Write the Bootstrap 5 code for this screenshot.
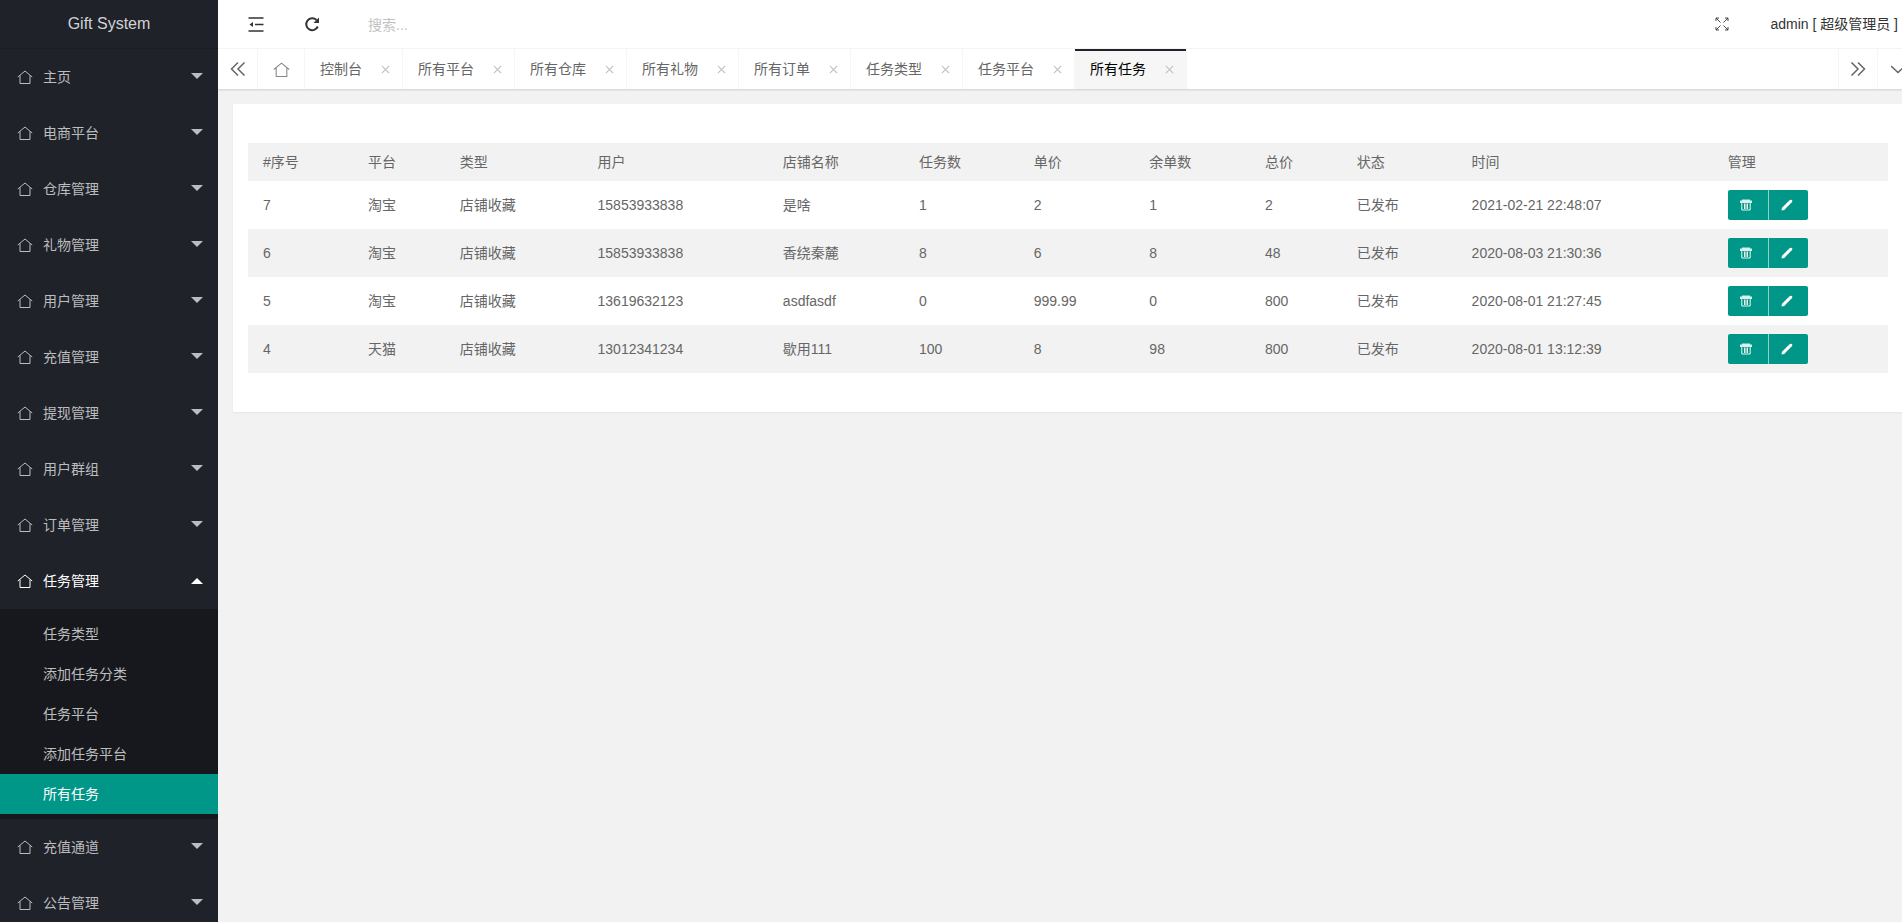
<!DOCTYPE html>
<html lang="zh-CN">
<head>
<meta charset="utf-8">
<meta name="viewport" content="width=device-width, initial-scale=1">
<title>Gift System</title>
<link href="https://cdn.jsdelivr.net/npm/bootstrap@5.3.0/dist/css/bootstrap.min.css" rel="stylesheet">
<style>
  body { font: 14px/24px "Liberation Sans", "Noto Sans CJK SC", sans-serif; color: #666; background: #f2f2f2; }
  a { color: inherit; text-decoration: none; }
  svg { display: block; fill: none; stroke: currentColor; flex: none; }

  .side { width: 218px; background: #20222a; color: #bcbdbf; }
  .side-logo { height: 49px; font-size: 16px; color: #d2d3d4; border-bottom: 1px solid #1b1d23; }
  .side-item { height: 56px; padding: 0 15px 0 17px; gap: 10px; }
  .side-item.open { color: #fff; }
  .caret { width: 12px; margin-bottom: 2px; border: 6px solid transparent; border-top-color: currentColor; border-bottom: 0; }
  .open .caret { margin-bottom: 0; border-top: 0; border-bottom: 6px solid currentColor; }
  .side-sub { padding: 5px 0; background: #17181d; }
  .side-sub a { display: block; padding: 0 43px; line-height: 40px; }
  .side-sub .current { background: #009688; color: #fff; }

  .top { height: 49px; padding: 0 4px 0 10px; color: #333; border-bottom: 1px solid #f6f6f6; }
  .tool { width: 56px; border: 0; background: none; color: inherit; padding: 0; display: flex; justify-content: center; }
  .search { width: 200px; border: 0; padding: 2px 0 0; margin-left: 28px; color: #666; background: none; outline: 0; }
  .search::placeholder { color: #c2c2c2; opacity: 1; }
  .user { margin-left: 20px; }

  .tabs { height: 40px; box-shadow: 0 1px 2px rgba(0,0,0,.15); z-index: 1; }
  .tab-ctl, .tab-page { border: 0; border-right: 1px solid #f6f6f6; background: none; color: #666; padding: 0; }
  .tab-ctl { width: 40px; display: flex; align-items: center; justify-content: center; flex: none; }
  .tab-home { width: 47px; color: #888; }
  .tab-page { display: flex; align-items: center; padding: 0 12px 0 15px; gap: 19px; white-space: nowrap; }
  .tab-page button { border: 0; background: none; padding: 0; color: #c2c2c2; }
  .tab-page.current { background: #f6f6f6; color: #000; box-shadow: inset 0 2px #20222a; }
  .tab-next { border-left: 1px solid #f6f6f6; }
  .tab-more { width: 24px; overflow: hidden; justify-content: flex-start; padding-left: 13px; border: 0; }

  .panel { margin: 15px 0 15px 15px; padding: 39px 14px 39px 15px; background: #fff; box-shadow: 0 1px 2px rgba(0,0,0,.06); }
  .tasks { width: 100%; table-layout: fixed; margin: 0; }
  .tasks th, .tasks td { padding: 0 15px; font-weight: 400; white-space: nowrap; }
  .tasks th { height: 38px; }
  .tasks td { height: 48px; }
  .tasks thead tr, .tasks tbody tr:nth-child(even) { background: #f2f2f2; }
  .act { width: 40px; height: 30px; border: 0; border-radius: 2px 0 0 2px; background: #009688; color: #fff; display: flex; align-items: center; justify-content: center; padding: 0 3px 0 0; }
  .act + .act { border-left: 1px solid #8fd0ca; border-radius: 0 2px 2px 0; }
</style>
</head>
<body>
<svg class="d-none" xmlns="http://www.w3.org/2000/svg">
  <symbol id="i-home" viewBox="0 0 16 16"><path d="M.8 8 8 2 15.200 8M3 6.500V14.500H13V6.500"/></symbol>
  <symbol id="i-x" viewBox="0 0 8 8"><path d="M.8.8 7.200 7.200M7.200.8.8 7.200"/></symbol>
  <symbol id="i-trash" viewBox="0 0 12 12"><path d="M0 1.500H12V4H0zM2 .5H10V2H2z" fill="currentColor" fill-opacity=".85" stroke="none"/><path d="M1.800 4V11H10.200V4M4.500 4.500V10M6 4.500V10M7.500 4.500V10" stroke-width=".9"/></symbol>
  <symbol id="i-pen" viewBox="0 0 12 12"><path d="M.5 11.500 1 8.800 8.500 1.200Q10 .2 11 1 11.800 2 10.800 3.300L3.200 10.900Z" fill="currentColor" stroke="none"/></symbol>
</svg>

<div class="d-flex vh-100 overflow-hidden">
  <nav class="side flex-shrink-0 overflow-hidden" id="side">
    <div class="side-logo d-flex align-items-center justify-content-center">Gift System</div>
  </nav>

  <div class="flex-grow-1 d-flex flex-column overflow-hidden">
    <header class="top bg-white d-flex align-items-center flex-shrink-0">
      <button class="tool" aria-label="收起菜单"><svg width="16" height="16" viewBox="0 0 16 16"><path d="M.5 2H15.500M7 8.500H15.500M.5 15H15.500" stroke-width="1.600"/><path d="M1.500 8.500 5 6V11Z" fill="currentColor" stroke="none"/></svg></button>
      <button class="tool" aria-label="刷新"><svg width="16" height="16" viewBox="0 0 16 16" stroke-width="2"><path d="M13.800 10.500A6 6 0 1 1 12.500 4"/><path d="M15 1.500V7H9.500Z" fill="currentColor" stroke="none"/></svg></button>
      <input class="search" type="text" placeholder="搜索..." aria-label="搜索">
      <button class="tool ms-auto" aria-label="全屏"><svg width="14" height="14" viewBox="0 0 14 14" stroke-width=".9"><path d="M1 4V1H4M1 1 5.500 5.500M10 1H13V4M13 1 8.500 5.500M1 10V13H4M1 13 5.500 8.500M13 10V13H10M13 13 8.500 8.500"/></svg></button>
      <a href="#" class="user">admin [ 超级管理员 ]</a>
    </header>

    <div class="tabs bg-white d-flex flex-shrink-0 position-relative">
      <button class="tab-ctl" aria-label="向左"><svg width="16" height="16" viewBox="0 0 16 16" stroke-width="1.500"><path d="M8 1.500 1.500 8 8 14.500M14.500 1.500 8 8 14.500 14.500"/></svg></button>
      <button class="tab-ctl tab-home" aria-label="首页"><svg width="17" height="17"><use href="#i-home"/></svg></button>
      <div class="d-flex flex-grow-1 overflow-hidden" id="tabs"></div>
      <button class="tab-ctl tab-next" aria-label="向右"><svg width="16" height="16" viewBox="0 0 16 16" stroke-width="1.500"><path d="M1.500 1.500 8 8 1.500 14.500M8 1.500 14.500 8 8 14.500"/></svg></button>
      <button class="tab-ctl tab-more" aria-label="更多"><svg width="14" height="14" viewBox="0 0 14 14" stroke-width="1.500"><path d="M0 4 7 10.500 14 4"/></svg></button>
    </div>

    <main class="panel">
      <table class="tasks">
        <colgroup>
          <col style="width:6.4%"><col style="width:5.6%"><col style="width:8.4%"><col style="width:11.3%"><col style="width:8.3%"><col style="width:7%"><col style="width:7.05%"><col style="width:7.05%"><col style="width:5.6%"><col style="width:7%"><col style="width:15.62%"><col style="width:10.68%">
        </colgroup>
        <thead><tr><th>#序号</th><th>平台</th><th>类型</th><th>用户</th><th>店铺名称</th><th>任务数</th><th>单价</th><th>余单数</th><th>总价</th><th>状态</th><th>时间</th><th>管理</th></tr></thead>
        <tbody id="rows"></tbody>
      </table>
    </main>
  </div>
</div>

<script src="https://cdn.jsdelivr.net/npm/bootstrap@5.3.0/dist/js/bootstrap.bundle.min.js"></script>
<script>
  const menu = ['主页', '电商平台', '仓库管理', '礼物管理', '用户管理', '充值管理', '提现管理', '用户群组', '订单管理', '任务管理', '充值通道', '公告管理'];
  const sub = ['任务类型', '添加任务分类', '任务平台', '添加任务平台', '所有任务'];
  document.getElementById('side').insertAdjacentHTML('beforeend', menu.map(m => {
    const open = m === '任务管理';
    return `<a href="#" class="side-item d-flex align-items-center ${open ? 'open' : ''}"><svg width="16" height="16"><use href="#i-home"/></svg><span>${m}</span><i class="caret ms-auto"></i></a>` +
      (open ? `<div class="side-sub">${sub.map(s => `<a href="#" class="${s === '所有任务' ? 'current' : ''}">${s}</a>`).join('')}</div>` : '');
  }).join(''));

  const tabs = ['控制台', '所有平台', '所有仓库', '所有礼物', '所有订单', '任务类型', '任务平台', '所有任务'];
  document.getElementById('tabs').innerHTML = tabs.map(t =>
    `<div class="tab-page ${t === '所有任务' ? 'current' : ''}"><a href="#">${t}</a><button aria-label="关闭"><svg width="9" height="9"><use href="#i-x"/></svg></button></div>`).join('');

  const rows = [
    [7, '淘宝', '店铺收藏', '15853933838', '是啥', 1, 2, 1, 2, '已发布', '2021-02-21 22:48:07'],
    [6, '淘宝', '店铺收藏', '15853933838', '香绕秦麓', 8, 6, 8, 48, '已发布', '2020-08-03 21:30:36'],
    [5, '淘宝', '店铺收藏', '13619632123', 'asdfasdf', 0, '999.99', 0, 800, '已发布', '2020-08-01 21:27:45'],
    [4, '天猫', '店铺收藏', '13012341234', '歇用111', 100, 8, 98, 800, '已发布', '2020-08-01 13:12:39']
  ];
  document.getElementById('rows').innerHTML = rows.map(r =>
    `<tr>${r.map(c => `<td>${c}</td>`).join('')}<td><div class="d-flex"><button class="act" aria-label="删除"><svg width="12" height="12"><use href="#i-trash"/></svg></button><button class="act" aria-label="编辑"><svg width="12" height="12"><use href="#i-pen"/></svg></button></div></td></tr>`).join('');
</script>
</body>
</html>
